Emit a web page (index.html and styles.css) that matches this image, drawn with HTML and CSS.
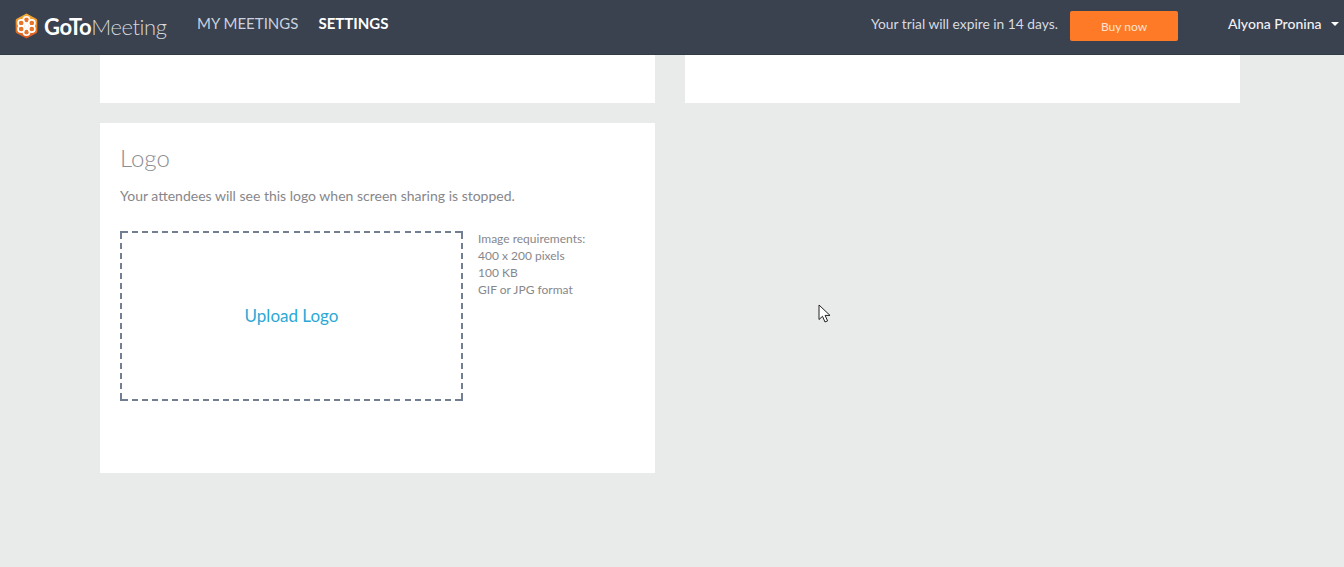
FILE: index.html
```html
<!DOCTYPE html>
<html lang="en">
<head>
<meta charset="utf-8">
<title>GoToMeeting Settings</title>
<link rel="stylesheet" href="styles.css">
</head>
<body>
<header class="topbar">
  <div class="brand">
    <svg class="brand-icon" width="23" height="26" viewBox="1.5 1 21 24" aria-hidden="true">
      <defs>
        <linearGradient id="hexfill" x1="0" y1="0" x2="0" y2="1">
          <stop offset="0" stop-color="#f9b233"/>
          <stop offset="1" stop-color="#d9541e"/>
        </linearGradient>
      </defs>
      <path d="M12 1.5 21 6.4a1.6 1.6 0 0 1 1 1.6v10a1.6 1.6 0 0 1-1 1.6L12 24.5 3 19.6a1.6 1.6 0 0 1-1-1.6V8a1.6 1.6 0 0 1 1-1.6Z" fill="url(#hexfill)"/>
      <g fill="#e8742a" stroke="#fff" stroke-width="1.5">
        <circle cx="12" cy="7.4" r="2.9"/>
        <circle cx="12" cy="18.6" r="2.9"/>
        <circle cx="7.1" cy="10.2" r="2.9"/>
        <circle cx="16.9" cy="10.2" r="2.9"/>
        <circle cx="7.1" cy="15.8" r="2.9"/>
        <circle cx="16.9" cy="15.8" r="2.9"/>
      </g>
      <circle cx="12" cy="13" r="2.2" fill="#fff"/>
    </svg>
    <span class="wordmark"><b>GoTo</b>Meeting</span>
  </div>
  <nav class="mainnav">
    <a class="navlink">MY MEETINGS</a>
    <a class="navlink active">SETTINGS</a>
  </nav>
  <div class="trial">Your trial will expire in 14 days.</div>
  <button class="buy" type="button">Buy now</button>
  <div class="user">Alyona Pronina<span class="caret"></span></div>
</header>

<main class="content">
  <div class="row">
    <section class="card stub"></section>
    <section class="card stub"></section>
  </div>
  <div class="row">
    <section class="card logo-card">
      <h2 class="card-title">Logo</h2>
      <p class="card-desc">Your attendees will see this logo when screen sharing is stopped.</p>
      <div class="upload-row">
        <div class="dropzone"><a class="upload-link">Upload Logo</a></div>
        <ul class="reqs">
          <li>Image requirements:</li>
          <li>400 x 200 pixels</li>
          <li>100 KB</li>
          <li>GIF or JPG format</li>
        </ul>
      </div>
    </section>
  </div>
</main>

<svg class="cursor" width="14" height="20" viewBox="0 0 14 20" aria-hidden="true">
  <path d="M1 1V15.5L4.5 12.3 7 18 9.6 16.9 7.1 11.4H12Z" fill="#fff" stroke="#222" stroke-width="1"/>
</svg>
</body>
</html>
```

FILE: styles.css
```css
* { box-sizing: border-box; }
html, body { margin: 0; height: 100%; overflow: hidden; }
body {
  background: #e9ebea;
  font-family: Lato, "Liberation Sans", sans-serif;
  color: #8a8a8e;
  position: relative;
}
.topbar {
  height: 55px;
  background: #3a414f;
  border-bottom: 1px solid #333a47;
  display: flex;
  align-items: center;
  padding: 0 5px 0 15px;
}
.brand { display: flex; align-items: center; width: 182px; }
.brand-icon { flex: none; margin-bottom: 3px; }
.wordmark {
  margin: 0 0 2px 6px;
  font-size: 22px;
  font-weight: 300;
  letter-spacing: -0.44px;
  color: #d5d8dc;
}
.wordmark b { font-weight: 700; color: #fff; }
.mainnav { display: flex; gap: 20px; flex: 1; margin-bottom: 9px; }
.navlink { font-size: 15px; font-weight: 400; color: #c9d2de; }
.navlink.active { font-weight: 700; color: #fff; }
.trial { font-size: 13.8px; color: #d7dbe0; margin-bottom: 8px; }
.buy {
  margin: 0 0 2px 12px;
  width: 108px;
  height: 30px;
  border: 0;
  border-radius: 2px;
  background: #ff7a27;
  color: #fde3d1;
  font-family: inherit;
  font-size: 12px;
}
.user {
  margin: 0 0 8px 50px;
  width: 111px;
  font-size: 14px;
  font-weight: 500;
  color: #f2f3f5;
  white-space: nowrap;
}
.caret {
  display: inline-block;
  margin-left: 9px;
  vertical-align: 3px;
  border-left: 4px solid transparent;
  border-right: 4px solid transparent;
  border-top: 4px solid #fff;
}
.content {
  width: 1140px;
  margin-left: 100px;
  display: flex;
  flex-direction: column;
  gap: 20px;
}
.row { display: flex; gap: 30px; }
.card { width: 555px; background: #fff; }
.stub { height: 48px; }
.logo-card { height: 350px; padding: 20px; }
.card-title {
  margin: 0;
  font-size: 24px;
  line-height: 30px;
  font-weight: 300;
  color: #8d8d92;
}
.card-desc {
  margin: 14px 0 0;
  font-size: 14px;
  line-height: 18px;
  color: #87878b;
}
.upload-row { display: flex; margin-top: 26px; }
.dropzone {
  --dash: #727e92;
  --dash-x: repeating-linear-gradient(to right, var(--dash) 0 6px, transparent 6px 10.09px);
  --dash-y: repeating-linear-gradient(to bottom, var(--dash) 0 6px, transparent 6px 10px);
  --solid: linear-gradient(var(--dash), var(--dash));
  width: 343px;
  height: 170px;
  flex: none;
  padding-bottom: 2px;
  display: flex;
  align-items: center;
  justify-content: center;
  background-repeat: no-repeat;
  background-image:
    var(--dash-x), var(--dash-x), var(--dash-y), var(--dash-y),
    var(--solid), var(--solid), var(--solid), var(--solid);
  background-size:
    339px 2px, 339px 2px, 2px 166px, 2px 166px,
    2px 2px, 2px 2px, 2px 2px, 2px 2px;
  background-position:
    2px 0, 2px 100%, 0 2px, 100% 2px,
    0 0, 100% 0, 0 100%, 100% 100%;
}
.upload-link { font-size: 17px; color: #2ba8d6; }
.reqs {
  list-style: none;
  margin: -1px 0 0 15px;
  padding: 0;
  font-size: 12px;
  line-height: 17px;
  color: #87878b;
}
.cursor { position: absolute; left: 818px; top: 304px; }
```
